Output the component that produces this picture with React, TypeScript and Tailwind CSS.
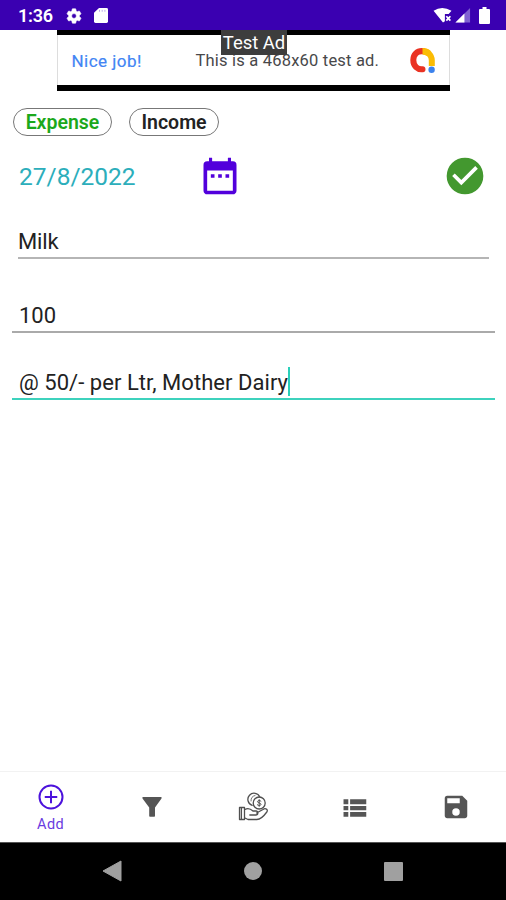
import type { ReactNode } from "react";

function StatusBar() {
  return (
    <header className="flex h-[30px] items-center bg-[#3a00b1] pl-[18px] text-white">
      <span className="w-[48px] pt-px text-[18px] leading-[30px] font-semibold tracking-[-0.2px] whitespace-nowrap">1:36</span>
      <svg className="mt-px -ml-[1px] h-[18px] w-[18px]" viewBox="0 0 24 24" fill="currentColor">
        <path d="M19.14 12.94c.04-.3.06-.61.06-.94s-.02-.64-.07-.94l2.03-1.58a.49.49 0 0 0 .12-.61l-1.92-3.32a.49.49 0 0 0-.59-.22l-2.39.96a7 7 0 0 0-1.62-.94l-.36-2.54a.48.48 0 0 0-.48-.41h-3.84a.48.48 0 0 0-.47.41l-.36 2.54c-.59.24-1.13.57-1.62.94l-2.39-.96a.48.48 0 0 0-.59.22L2.74 8.87a.48.48 0 0 0 .12.61l2.03 1.58a7 7 0 0 0 0 1.88l-2.03 1.58a.49.49 0 0 0-.12.61l1.92 3.32c.12.22.37.29.59.22l2.39-.96c.5.38 1.03.7 1.62.94l.36 2.54c.05.24.24.41.48.41h3.84c.24 0 .44-.17.47-.41l.36-2.54a7 7 0 0 0 1.62-.94l2.39.96c.22.08.47 0 .59-.22l1.92-3.32a.48.48 0 0 0-.12-.61zM12 15.2a3.2 3.2 0 1 1 0-6.4 3.2 3.2 0 0 1 0 6.400z" stroke="currentColor" strokeWidth=".8" />
      </svg>
      <svg className="mt-px ml-[11px] h-[15px] w-[14px]" viewBox="0 0 14 16" preserveAspectRatio="none">
        <path d="M5 0h7.500Q14 0 14 1.500V14.500Q14 16 12.500 16h-11Q0 16 0 14.500V5z" fill="#fff" />
        <path d="M5.500 2v2M8.200 2v2M10.900 2v2" stroke="#b9a6ea" strokeWidth="1" />
      </svg>
      <svg className="ml-auto h-[17px] w-[20px]" viewBox="0 0 20 18" fill="#fff">
        <path d="M0 4Q9-2 19 4L16 7.500H12V15L10 16.500z" />
        <path d="m13.500 9.800 4.300 4.600m0-4.600-4.300 4.600" stroke="#fff" strokeWidth="1.900" />
      </svg>
      <svg className="ml-[2px] h-[16px] w-[16px]" viewBox="0 0 16 17">
        <path d="M0 16.500 15.500 1v15.500z" fill="#8061d2" />
        <path d="M0 16.500 9.500 7v9.500z" fill="#fff" />
      </svg>
      <svg className="mr-[16px] ml-[8px] h-[17px] w-[11px]" viewBox="0 0 11 17" fill="#fff">
        <path d="M3.500 0h4v2H10q1 0 1 1v13q0 1-1 1H1q-1 0-1-1V3q0-1 1-1h2.500z" />
      </svg>
    </header>
  );
}

function AdBanner() {
  return (
    <section className="relative ml-[57px] flex h-[61px] w-[393px] items-center border-t-[5px] border-b-[6px] border-black bg-white shadow-[inset_1px_0_#ddd,inset_-1px_0_#ddd]">
      <span className="ml-[14.500px] w-[124px] pt-px text-[17px] leading-5 tracking-[0.480px] whitespace-nowrap text-[#4285f4] [-webkit-text-stroke:0.2px_#4285f4]">Nice job!</span>
      <span className="w-[213px] pt-[2px] text-[16.500px] leading-5 tracking-[0.200px] whitespace-nowrap text-[#48484a]">This is a 468x60 test ad.</span>
      <svg className="h-[27px] w-[27px] shrink-0" viewBox="0 0 27 27" fill="none">
        <path d="M13.500 4.200A8.600 9.300 0 0 1 22.800 13.300V19" stroke="#fbbc04" strokeWidth="6" />
        <path d="M14 4.200C8 3.500 4.300 8 4.300 13c0 6 4.200 9.800 9.200 9.300" stroke="#ea3323" strokeWidth="6" strokeLinecap="round" />
        <path d="M13.500 1v6.400q2.500 0 4.300 1.500L22 4.200Q18.500 1 13.500 1z" fill="#fbbc04" />
        <circle cx="22.600" cy="22.800" r="3.200" fill="#3b82ed" />
      </svg>
      <span className="absolute -top-[5px] left-[164px] flex h-[25px] w-[66px] items-center justify-center bg-[#3d3d3d] pt-[2px] text-[18.500px] tracking-[-0.050px] whitespace-nowrap text-white">Test Ad</span>
    </section>
  );
}

function NavItem({ children }: { children: ReactNode }) {
  return <button className="flex h-full flex-1 flex-col items-center text-[#555]">{children}</button>;
}

function BottomNav() {
  return (
    <nav className="flex h-[71px] border-t border-[#f2f2f2] bg-white">
      <NavItem>
        <svg className="mt-[10px] h-[30px] w-[30px] text-[#4c12dc]" viewBox="0 0 24 24" fill="currentColor">
          <path d="M12.800 7h-1.600v4.200H7v1.600h4.200V17h1.600v-4.200H17v-1.600h-4.200V7zM12 2a10 10 0 1 0 0 20 10 10 0 0 0 0-20zm0 18.400a8.400 8.400 0 1 1 0-16.800 8.400 8.400 0 0 1 0 16.800z" />
        </svg>
        <span className="mt-[3.500px] text-[14.500px] leading-[18px] tracking-[0.400px] text-[#6a3be0]">Add</span>
      </NavItem>
      <NavItem>
        <svg className="mt-[25px] h-5 w-5" viewBox="0 0 20 20" fill="currentColor">
          <path d="M.500 0h19v1.500L13 10.500V19q0 .8-.8.8H8q-.8 0-.8-.8v-8.500L.500 1.500z" />
        </svg>
      </NavItem>
      <NavItem>
        <svg className="mt-[20px] h-[30px] w-[31px]" viewBox="0 0 31 30" fill="none" stroke="#505050" strokeWidth="1.300" strokeLinejoin="round" strokeLinecap="round">
          <path d="M1.500 15.500h5v12h-5zM3.400 16v11M7 17.500c3-2 5.500-.8 8 1.500h3c2.500 0 2.500 4-.2 4h-6M18.500 21l6.500-3.500c2.500-2 5.500.2 3.800 2.500-2.500 3.500-6 7.300-10 7.500H10L7 26" />
          <path d="M14.200 13.300a6.200 6.200 0 1 1 7.600-8.300" />
          <circle cx="21.200" cy="11" r="6" />
          <path d="M23 9.200c-1-1.200-3.500-.8-3.500.5 0 1.600 3.500.9 3.500 2.600 0 1.500-2.700 1.700-3.700.5M21.200 7.600v6.800" strokeWidth="1" />
          <path d="M13 9c-.3-3 1.500-5 4-5.500" strokeWidth=".8" />
        </svg>
      </NavItem>
      <NavItem>
        <svg className="mt-[20.500px] h-[30px] w-[31px]" viewBox="0 0 24 24" fill="currentColor" preserveAspectRatio="none">
          <path d="M3.500 13.800h3.700v-3.400H3.500zm0 5.200h3.700v-3.800H3.500zm0-10h3.700V5H3.500zM8.600 13.800h12.500v-3.400H8.600zm0 5.200h12.500v-3.800H8.600zm0-14v4h12.500V5z" />
        </svg>
      </NavItem>
      <NavItem>
        <svg className="mt-[20px] ml-[2px] h-[30px] w-[30px]" viewBox="0 0 24 24" fill="currentColor">
          <path d="M17 3H5a2 2 0 0 0-2 2v14c0 1.100.89 2 2 2h14c1.100 0 2-.9 2-2V7l-4-4zm-5 16a3 3 0 1 1 0-6 3 3 0 0 1 0 6zm3-10H5V5h10v4z" />
        </svg>
      </NavItem>
    </nav>
  );
}

function SystemBar() {
  return (
    <footer className="flex h-[58px] items-center justify-center border-t border-[#555] bg-black pr-[2px] pb-px">
      <svg className="h-[22px] w-[20px]" viewBox="0 0 20 22" fill="#a0a0a0">
        <path d="M19 1v20L1 11z" stroke="#a0a0a0" strokeLinejoin="round" />
      </svg>
      <span className="mx-[122px] h-[18px] w-[18px] rounded-full bg-[#a0a0a0]" />
      <span className="h-[19px] w-[19px] rounded-[1px] bg-[#a0a0a0]" />
    </footer>
  );
}

export default function App() {
  return (
    <div className="flex h-[900px] w-[506px] flex-col overflow-hidden bg-white font-['Roboto','Liberation_Sans',sans-serif]">
      <StatusBar />
      <AdBanner />
      <main className="flex flex-1 flex-col text-[#222]">
        <div className="mt-[17px] flex gap-[17px] pl-[13px] text-[19px] font-semibold">
          <button className="flex h-[28px] w-[99px] items-center justify-center rounded-full border border-[#777] pt-px text-[19.500px] text-[#1ba81b]">Expense</button>
          <button className="flex h-[28px] w-[90px] items-center justify-center rounded-full border border-[#777] pt-px text-[19.500px]">Income</button>
        </div>
        <div className="mt-[16px] flex h-[48px] items-center pr-[19px] pl-[19px]">
          <span className="w-[178.500px] pt-[2px] text-[24.500px] leading-[30px] whitespace-nowrap text-[#2caebb]">27/8/2022</span>
          <svg className="h-[44px] w-[44px]" viewBox="0 0 24 24" fill="#5200dc">
            <path d="M9 11H7v2h2v-2zm4 0h-2v2h2v-2zm4 0h-2v2h2v-2zm2-7h-1V2h-1.700v2H7.700V2H6v2H5a2 2 0 0 0-2 2v14c0 1.100.89 2 2 2h14c1.100 0 2-.9 2-2V6a2 2 0 0 0-2-2zm0 16H5V9h14v11z" />
          </svg>
          <svg className="ml-auto h-[44px] w-[44px]" viewBox="0 0 24 24" fill="#43982f">
            <path d="M12 2a10 10 0 1 0 0 20 10 10 0 0 0 0-20zm-2 15-5-5 1.410-1.410L10 14.170l7.590-7.590L19 8l-9 9z" />
          </svg>
        </div>
        <div className="mr-[17px] ml-[18px] flex h-[59px] items-end border-b-2 border-[#b5b5b5] pb-[2px] text-[22px] leading-[26px] tracking-[-0.150px]">Milk</div>
        <div className="mr-[11px] ml-[12px] flex h-[74px] items-end border-b-2 border-[#aaa] pb-[2px] pl-[7px] text-[22px] leading-[26px]">100</div>
        <div className="mr-[11px] ml-[12px] flex h-[67px] items-end border-b-2 border-[#3dd2bd] pb-[2px] pl-[7px] text-[22px] leading-[26px]">
          <span className="tracking-[0.040px] whitespace-nowrap">@ 50/- per Ltr, Mother Dairy</span>
          <span className="h-[29px] w-[2px] bg-[#2ad0ba]" />
        </div>
      </main>
      <BottomNav />
      <SystemBar />
    </div>
  );
}
